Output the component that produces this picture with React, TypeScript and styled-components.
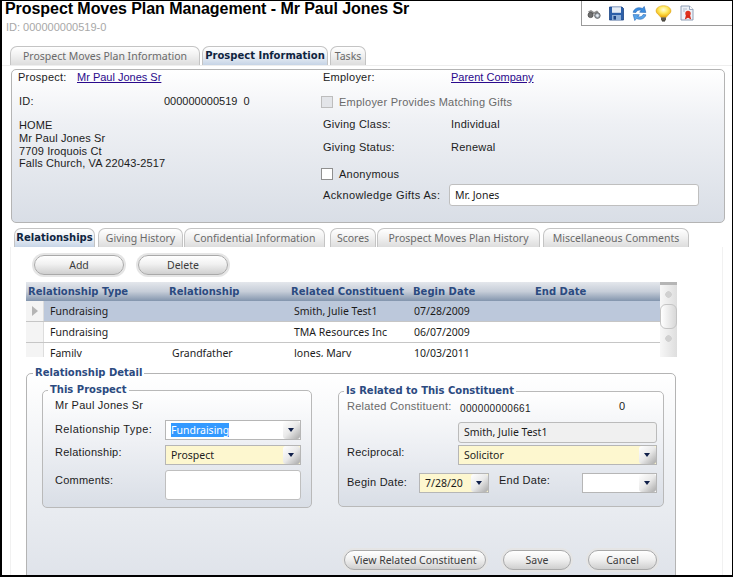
import * as React from 'react';
import styled, {createGlobalStyle, css} from 'styled-components';

const ARIAL = `"Liberation Sans", Arial, sans-serif`;
const TAHOMA = `"Noto Sans", "Open Sans", sans-serif`;
const TAHOMA_BOLD = `"DejaVu Sans", "Noto Sans", sans-serif`;
const BLUE = '#2b4a80';
const PANEL_FADE = 'linear-gradient(180deg, #ffffff 0%, #eef0f4 35%, #d9dee6 100%)';

const GlobalStyle = createGlobalStyle`
    html, body {
        margin: 0;
        padding: 0;
        background: #ffffff;
    }
`;

export default function App() {
    return (
        <>
            <GlobalStyle />
            <Window>
                <Header>
                    <TitleBlock>
                        <Title>Prospect Moves Plan Management - Mr Paul Jones Sr</Title>
                        <SubTitle>ID: 000000000519-0</SubTitle>
                    </TitleBlock>
                    <Toolbar>
                        <BinocularsIcon />
                        <SaveIcon />
                        <RefreshIcon />
                        <BulbIcon />
                        <ReportIcon />
                    </Toolbar>
                </Header>

                <MainTabs>
                    <MainTab $w={190}>Prospect Moves Plan Information</MainTab>
                    <MainTab $w={126} $active>Prospect Information</MainTab>
                    <MainTab $w={36}>Tasks</MainTab>
                </MainTabs>

                <InfoPanel>
                    <InfoColumn>
                        <Row $h={14}>
                            <Label $w={59}>Prospect:</Label>
                            <Link>Mr Paul Jones Sr</Link>
                        </Row>
                        <Row $h={14} $mt={10}>
                            <Label $w={145} $ml={1}>ID:</Label>
                            <IdNumber>000000000519&nbsp;&nbsp;0</IdNumber>
                        </Row>
                        <Address>
                            <HomeLine>HOME</HomeLine>
                            <div>Mr Paul Jones Sr</div>
                            <div>7709 Iroquois Ct</div>
                            <div>Falls Church, VA 22043-2517</div>
                        </Address>
                    </InfoColumn>
                    <InfoColumn>
                        <Row $h={14}>
                            <Label $w={128}>Employer:</Label>
                            <Link>Parent Company</Link>
                        </Row>
                        <Row $h={14} $mt={11}>
                            <CheckBox $disabled />
                            <Label $muted>Employer Provides Matching Gifts</Label>
                        </Row>
                        <Row $h={14} $mt={8}>
                            <Label $w={128}>Giving Class:</Label>
                            <Value>Individual</Value>
                        </Row>
                        <Row $h={14} $mt={9}>
                            <Label $w={128}>Giving Status:</Label>
                            <Value>Renewal</Value>
                        </Row>
                        <Row $h={14} $mt={13}>
                            <CheckBox />
                            <Label>Anonymous</Label>
                        </Row>
                        <Row $h={22} $mt={3}>
                            <Label $w={126} $wide $pt={4}>Acknowledge Gifts As:</Label>
                            <TextBox $w={250}>Mr. Jones</TextBox>
                        </Row>
                    </InfoColumn>
                </InfoPanel>

                <SubTabs>
                    <SubTab $w={81} $active>Relationships</SubTab>
                    <SubTab $w={85} $ml={3}>Giving History</SubTab>
                    <SubTab $w={141} $ml={1}>Confidential Information</SubTab>
                    <SubTab $w={46} $ml={5}>Scores</SubTab>
                    <SubTab $w={163} $ml={1}>Prospect Moves Plan History</SubTab>
                    <SubTab $w={146} $ml={3}>Miscellaneous Comments</SubTab>
                </SubTabs>

                <Content>
                    <GridActions>
                        <PillButton $w={90}>Add</PillButton>
                        <PillButton $w={90}>Delete</PillButton>
                    </GridActions>

                    <GridWrap>
                        <DataGrid>
                            <GridHeader>
                                <span>Relationship Type</span>
                                <span>Relationship</span>
                                <span>Related Constituent</span>
                                <span>Begin Date</span>
                                <span>End Date</span>
                            </GridHeader>
                            <GridRow $selected>
                                <RowMarker><MarkerArrow /></RowMarker>
                                <Cell>Fundraising</Cell>
                                <Cell />
                                <Cell>Smith, Julie Test1</Cell>
                                <Cell>07/28/2009</Cell>
                                <Cell />
                            </GridRow>
                            <GridRow>
                                <RowMarker />
                                <Cell>Fundraising</Cell>
                                <Cell />
                                <Cell>TMA Resources Inc</Cell>
                                <Cell>06/07/2009</Cell>
                                <Cell />
                            </GridRow>
                            <GridRow>
                                <RowMarker />
                                <Cell>Family</Cell>
                                <Cell>Grandfather</Cell>
                                <Cell>Jones, Mary</Cell>
                                <Cell>10/03/2011</Cell>
                                <Cell />
                            </GridRow>
                        </DataGrid>
                        <ScrollBar>
                            <ScrollCap />
                            <ScrollEnd />
                            <ScrollThumb />
                            <ScrollEnd />
                        </ScrollBar>
                    </GridWrap>

                    <DetailSet>
                        <Legend $ml={6}>Relationship Detail</Legend>
                        <DetailColumns>
                            <ProspectSet>
                                <Legend $ml={-7}>This Prospect</Legend>
                                <Row $h={14} $mt={1}>
                                    <Label>Mr Paul Jones Sr</Label>
                                </Row>
                                <Row $h={20} $mt={8}>
                                    <Label $w={110} $pt={2} $wide>Relationship Type:</Label>
                                    <Select $w={136}>
                                        <SelectText><Highlight>Fundraising</Highlight></SelectText>
                                        <SelectArrow />
                                    </Select>
                                </Row>
                                <Row $h={20} $mt={5}>
                                    <Label $w={110}>Relationship:</Label>
                                    <Select $w={136} $required>
                                        <SelectText>Prospect</SelectText>
                                        <SelectArrow />
                                    </Select>
                                </Row>
                                <Row $h={30} $mt={5}>
                                    <Label $w={110} $pt={3}>Comments:</Label>
                                    <TextBox $w={136} />
                                </Row>
                            </ProspectSet>
                            <RelatedSet>
                                <Legend $ml={-3}>Is Related to This Constituent</Legend>
                                <Row $h={15} $mt={1}>
                                    <Label $w={113} $muted>Related Constituent:</Label>
                                    <IdValue $w={159}>000000000661</IdValue>
                                    <Value>0</Value>
                                </Row>
                                <Row $h={21} $mt={8}>
                                    <Label $w={111} />
                                    <ReadOnlyBox>Smith, Julie Test1</ReadOnlyBox>
                                </Row>
                                <Row $h={20} $mt={2}>
                                    <Label $w={111}>Reciprocal:</Label>
                                    <Select $w={199} $required>
                                        <SelectText>Solicitor</SelectText>
                                        <SelectArrow />
                                    </Select>
                                </Row>
                                <Row $h={20} $mt={8}>
                                    <Label $w={72} $pt={2}>Begin Date:</Label>
                                    <Select $w={70} $required>
                                        <SelectText>7/28/20</SelectText>
                                        <SelectArrow />
                                    </Select>
                                    <Label $w={83} $ml={10}>End Date:</Label>
                                    <Select $w={75}>
                                        <SelectText />
                                        <SelectArrow />
                                    </Select>
                                </Row>
                            </RelatedSet>
                        </DetailColumns>
                        <DetailActions>
                            <PillButton $w={142}>View Related Constituent</PillButton>
                            <PillButton $w={68}>Save</PillButton>
                            <PillButton $w={69}>Cancel</PillButton>
                        </DetailActions>
                    </DetailSet>
                </Content>
            </Window>
        </>
    );
}

function BinocularsIcon() {
    return (
        <svg width="14" height="15" viewBox="0 0 14 15">
            <path d="M1 5.5 L4 4 L7 6 L10 4.5 L12 6.5 L7 8 L3 8 Z" fill="#8d8d8d" />
            <circle cx="3.6" cy="9" r="2.6" fill="#6f6f6f" stroke="#444" strokeWidth="0.7" />
            <circle cx="10.4" cy="9.6" r="2.8" fill="#a5aeb8" stroke="#444" strokeWidth="0.7" />
            <circle cx="10.4" cy="9.6" r="1.3" fill="#e8edf2" />
        </svg>
    );
}

function SaveIcon() {
    return (
        <svg width="15" height="15" viewBox="0 0 15 15">
            <path d="M0.5 1 H13 L14.5 2.5 V14 H0.5 Z" fill="#2c5fa8" stroke="#1d4585" strokeWidth="0.8" />
            <rect x="3" y="1.2" width="9" height="5.6" fill="#e6edf5" />
            <rect x="3" y="9" width="9" height="5" fill="#8fb0d8" />
            <rect x="4.5" y="10" width="2.5" height="3.6" fill="#1d4585" />
        </svg>
    );
}

function RefreshIcon() {
    return (
        <svg width="15" height="15" viewBox="1.5 1 12 13">
            <path d="M2 6.5 C2.6 3.2 6.6 1.4 10 3.2 L11.6 1.4 L13 6.6 L7.6 6.4 L9 4.9 C6.8 4 5 5 4.4 6.6 Z" fill="#3b8de0" stroke="#1c5fae" strokeWidth="0.5" />
            <path d="M13 8.6 C12.4 11.8 8.4 13.6 5 11.8 L3.4 13.6 L2 8.4 L7.4 8.6 L6 10.1 C8.2 11 10 10 10.6 8.4 Z" fill="#5aa6ec" stroke="#1c5fae" strokeWidth="0.5" />
        </svg>
    );
}

function BulbIcon() {
    return (
        <svg width="17" height="17" viewBox="0 0 17 17">
            <defs>
                <radialGradient id="bulbGlow" cx="0.5" cy="0.35" r="0.6">
                    <stop offset="0" stopColor="#fffde0" />
                    <stop offset="0.5" stopColor="#ffe95c" />
                    <stop offset="1" stopColor="#eeae10" />
                </radialGradient>
            </defs>
            <path d="M8.5 0.7 C12.9 0.7 16 3 16 6 C16 8.6 12.6 9.8 11.2 12.4 H5.8 C4.4 9.8 1 8.6 1 6 C1 3 4.1 0.7 8.5 0.7 Z" fill="url(#bulbGlow)" stroke="#d99e14" strokeWidth="0.5" />
            <rect x="6" y="12.4" width="5" height="3" fill="#5f5a4c" />
            <rect x="7" y="15.2" width="3" height="1.3" fill="#2f2c24" />
        </svg>
    );
}

function ReportIcon() {
    return (
        <svg width="14" height="16" viewBox="0 0 14 16">
            <path d="M1 1 H9.5 L13 4.5 V15 H1 Z" fill="#eef2f8" stroke="#8494ae" strokeWidth="0.9" />
            <path d="M9.5 1 V4.5 H13" fill="#ffffff" stroke="#8494ae" strokeWidth="0.8" />
            <path d="M3 4 H7 M3 6 H5" stroke="#a9b6ca" strokeWidth="0.9" />
            <circle cx="8" cy="8.4" r="2.7" fill="#e0321e" />
            <path d="M6 10 L4.8 14.4 L8 12.8 L11.2 14.4 L10 10 Z" fill="#d92a18" />
        </svg>
    );
}

const Window = styled.div`
    box-sizing: border-box;
    width: 733px;
    height: 577px;
    overflow: hidden;
    background: #ffffff;
    border-style: solid;
    border-color: #000000;
    border-width: 1px 1px 2px 2px;
    color: #1c1c1c;
    font-family: ${ARIAL};
    font-size: 11px;
    letter-spacing: 0.24px;
`;

const Header = styled.div`
    display: flex;
    height: 45px;
    align-items: flex-start;
`;

const TitleBlock = styled.div`
    flex: 1;
    padding-left: 3px;
`;

const Title = styled.div`
    font-size: 16px;
    line-height: 16px;
    font-weight: bold;
    letter-spacing: -0.06px;
    color: #000000;
`;

const SubTitle = styled.div`
    margin: 3px 0 0 1px;
    font-size: 11px;
    line-height: 14px;
    letter-spacing: 0;
    color: #a8a8a8;
`;

const Toolbar = styled.div`
    box-sizing: border-box;
    display: flex;
    align-items: center;
    gap: 8px;
    width: 151px;
    height: 25px;
    padding-left: 5px;
    border-left: 1px solid #9a9a9a;
    border-bottom: 1px solid #9a9a9a;
`;

const MainTabs = styled.div`
    display: flex;
    align-items: flex-end;
    gap: 2px;
    height: 19px;
    padding-left: 8px;
    border-bottom: 1px solid #eeeeee;
`;

const tabBase = css<{$w: number; $active?: boolean}>`
    box-sizing: border-box;
    flex: none;
    width: ${p => p.$w}px;
    text-align: center;
    white-space: nowrap;
    border: 1px solid #c4c4c4;
    border-bottom: none;
    border-radius: 7px 7px 0 0;
    letter-spacing: 0;
    background: ${p =>
        p.$active
            ? 'linear-gradient(180deg, #ffffff 0%, #eef2f7 45%, #c6d4e6 100%)'
            : 'linear-gradient(180deg, #ffffff 0%, #f1f1f1 45%, #dddddd 100%)'};
    color: ${p => (p.$active ? '#0e2440' : '#6a6a6a')};
    font-family: ${p => (p.$active ? TAHOMA_BOLD : TAHOMA)};
    font-weight: ${p => (p.$active ? 'bold' : 'normal')};
    font-size: ${p => (p.$active ? '10px' : '10.5px')};
`;

const MainTab = styled.div<{$w: number; $active?: boolean}>`
    ${tabBase}
    height: 19px;
    line-height: 18px;
`;

const InfoPanel = styled.div`
    box-sizing: border-box;
    display: grid;
    grid-template-columns: 305px 1fr;
    width: 714px;
    height: 154px;
    margin: 3px 0 0 9px;
    padding: 0 0 0 6px;
    border: 1px solid #b4b4b4;
    border-radius: 5px;
    background: ${PANEL_FADE};
`;

const InfoColumn = styled.div`
    display: flex;
    flex-direction: column;
`;

const Row = styled.div<{$h: number; $mt?: number}>`
    display: flex;
    align-items: flex-start;
    flex: none;
    height: ${p => p.$h}px;
    margin-top: ${p => p.$mt || 0}px;
    line-height: 14px;
`;

const Label = styled.div<{$w?: number; $ml?: number; $pt?: number; $muted?: boolean; $wide?: boolean}>`
    flex: none;
    ${p => p.$w && `width: ${p.$w}px;`}
    margin-left: ${p => p.$ml || 0}px;
    padding-top: ${p => p.$pt || 0}px;
    white-space: nowrap;
    letter-spacing: ${p => (p.$wide ? '0.38px' : '0.24px')};
    color: ${p => (p.$muted ? '#6a6a6a' : '#1c1c1c')};
`;

const Value = styled.div`
    white-space: nowrap;
`;

const IdNumber = styled.div`
    white-space: nowrap;
    letter-spacing: 0;
`;

const IdValue = styled.div<{$w: number}>`
    flex: none;
    width: ${p => p.$w}px;
    padding-top: 3px;
    font-size: 10px;
    letter-spacing: 0.35px;
    white-space: nowrap;
`;

const Link = styled.a`
    color: #2a0a8c;
    text-decoration: underline;
    white-space: nowrap;
    letter-spacing: 0;
`;

const Address = styled.div`
    margin: 11px 0 0 1px;
    line-height: 12.5px;
    letter-spacing: 0.12px;
`;

const HomeLine = styled.div`
    height: 13px;
`;

const CheckBox = styled.div<{$disabled?: boolean}>`
    box-sizing: border-box;
    flex: none;
    width: 12px;
    height: 12px;
    margin: 1px 6px 0 -2px;
    border: 1px solid ${p => (p.$disabled ? '#bdbdbd' : '#8f8f8f')};
    background: ${p => (p.$disabled ? '#e3e5e9' : '#ffffff')};
`;

const TextBox = styled.div<{$w: number}>`
    box-sizing: border-box;
    flex: none;
    width: ${p => p.$w}px;
    height: 100%;
    padding: 0 5px;
    line-height: 20px;
    background: #ffffff;
    border: 1px solid #bfbfbf;
    border-radius: 3px;
    font-family: ${TAHOMA};
    font-size: 10.5px;
    letter-spacing: 0;
`;

const ReadOnlyBox = styled.div`
    box-sizing: border-box;
    flex: none;
    width: 199px;
    height: 100%;
    padding: 0 5px;
    line-height: 19px;
    background: #f0f0f0;
    border: 1px solid #bbbbbb;
    border-radius: 3px;
    font-family: ${TAHOMA};
    font-size: 10.5px;
    letter-spacing: 0;
`;

const SubTabs = styled.div`
    display: flex;
    align-items: flex-end;
    height: 19px;
    margin-top: 5px;
    padding-left: 12px;
`;

const SubTab = styled.div<{$w: number; $ml?: number; $active?: boolean}>`
    ${tabBase}
    height: 19px;
    line-height: 18px;
    margin-left: ${p => p.$ml || 0}px;
`;

const Content = styled.div`
    box-sizing: border-box;
    width: 713px;
    height: 340px;
    margin-left: 8px;
    border-left: 1px solid #f1f1f1;
    border-right: 1px solid #f1f1f1;
`;

const GridActions = styled.div`
    display: flex;
    gap: 14px;
    height: 27px;
    padding: 8px 0 0 23px;
`;

const PillButton = styled.div<{$w: number}>`
    box-sizing: border-box;
    flex: none;
    width: ${p => p.$w}px;
    height: 20px;
    line-height: 18px;
    text-align: center;
    white-space: nowrap;
    color: #3c3c3c;
    font-family: ${TAHOMA};
    font-size: 10.5px;
    letter-spacing: 0;
    border: 1px solid #a9a9a9;
    border-radius: 10px;
    background: linear-gradient(180deg, #ffffff 0%, #f1f1f1 45%, #cfcfcf 100%);
    box-shadow: 0 0 0 2px #e5e5e5;
`;

const GridWrap = styled.div`
    display: flex;
    height: 75px;
    margin-left: 15px;
`;

const DataGrid = styled.div`
    width: 634px;
    height: 75px;
    overflow: hidden;
`;

const GridHeader = styled.div`
    display: grid;
    grid-template-columns: 141px 122px 122px 122px 1fr;
    height: 19px;
    padding-left: 2px;
    line-height: 19px;
    background: linear-gradient(180deg, #e4e7ec 0%, #c6cdd8 50%, #8395ad 100%);
    color: ${BLUE};
    font-family: ${TAHOMA_BOLD};
    font-size: 10px;
    font-weight: bold;
    letter-spacing: 0;
    white-space: nowrap;
`;

const GridRow = styled.div<{$selected?: boolean}>`
    box-sizing: border-box;
    display: grid;
    grid-template-columns: 18px 122px 122px 120px 1fr;
    height: 21px;
    background: ${p => (p.$selected ? '#bcc8db' : '#ffffff')};
    border-bottom: 1px solid #c6c6c6;
`;

const RowMarker = styled.div`
    display: flex;
    align-items: center;
    justify-content: center;
    background: #f4f4f4;
    border-right: 1px solid #dddddd;
`;

const MarkerArrow = styled.div`
    width: 0;
    height: 0;
    border-style: solid;
    border-width: 5px 0 5px 6px;
    border-color: transparent transparent transparent #b5b5b5;
`;

const Cell = styled.div`
    padding-left: 6px;
    line-height: 20px;
    white-space: nowrap;
    font-family: ${TAHOMA};
    font-size: 10.5px;
    letter-spacing: 0;
`;

const ScrollBar = styled.div`
    flex: none;
    width: 17px;
    height: 75px;
    overflow: hidden;
    background: linear-gradient(90deg, #f7f7f7, #dedede);
`;

const ScrollCap = styled.div`
    height: 3px;
    background: #b5b5b5;
`;

const ScrollEnd = styled.div`
    height: 19px;
    background: radial-gradient(circle at 50% 50%, #d0d0d0 0 3px, transparent 3.5px);
`;

const ScrollThumb = styled.div`
    box-sizing: border-box;
    height: 25px;
    background: linear-gradient(90deg, #ffffff, #d8d8d8);
    border: 1px solid #c4c4c4;
    border-radius: 6px;
`;

const DetailSet = styled.fieldset`
    box-sizing: border-box;
    width: 650px;
    height: 215px;
    margin: 9px 0 0 15px;
    padding: 0;
    border: 1px solid #b4b4b4;
    border-radius: 5px;
    background: linear-gradient(180deg, #ffffff 0%, #f0f2f5 40%, #dfe3ea 100%);
    min-width: 0;
`;

const Legend = styled.legend<{$ml: number}>`
    height: 14px;
    margin-left: ${p => p.$ml}px;
    padding: 0 2px;
    line-height: 14px;
    font-family: ${TAHOMA_BOLD};
    font-size: 10px;
    font-weight: bold;
    letter-spacing: 0;
    color: ${BLUE};
`;

const DetailColumns = styled.div`
    display: flex;
    align-items: flex-start;
    gap: 26px;
    margin-top: 3px;
    padding-left: 15px;
`;

const innerSet = css`
    box-sizing: border-box;
    min-width: 0;
    margin: 0;
    border: 1px solid #b9b9b9;
    border-radius: 5px;
    background: linear-gradient(180deg, #ffffff 0%, #eef0f4 45%, #d9dee6 100%);
`;

const ProspectSet = styled.fieldset`
    ${innerSet}
    width: 270px;
    height: 125px;
    padding: 0 0 0 12px;
`;

const RelatedSet = styled.fieldset`
    ${innerSet}
    width: 326px;
    height: 123px;
    margin-top: 1px;
    padding: 0 0 0 8px;
`;

const Select = styled.div<{$w: number; $required?: boolean}>`
    box-sizing: border-box;
    display: flex;
    flex: none;
    width: ${p => p.$w}px;
    height: 20px;
    border: 1px solid #b6b6b6;
    background: ${p => (p.$required ? '#fdf7cf' : '#ffffff')};
`;

const SelectText = styled.div`
    flex: 1;
    min-width: 0;
    padding-left: 5px;
    overflow: hidden;
    white-space: nowrap;
    line-height: 18px;
    font-family: ${TAHOMA};
    font-size: 10.5px;
    letter-spacing: 0;
`;

const Highlight = styled.span`
    background: #3399ff;
    color: #ffffff;
`;

const SelectArrow = styled.div`
    position: relative;
    flex: none;
    width: 17px;
    border-radius: 3px;
    background: linear-gradient(135deg, #ffffff 0%, #e9e9e9 50%, #a9a9a9 100%);

    &::after {
        content: '';
        position: absolute;
        top: 7px;
        left: 5px;
        border-style: solid;
        border-width: 4px 3.5px 0 3.5px;
        border-color: #10204a transparent transparent transparent;
    }
`;

const DetailActions = styled.div`
    display: flex;
    justify-content: flex-end;
    gap: 17px;
    margin-top: 42px;
    padding-right: 18px;
`;
